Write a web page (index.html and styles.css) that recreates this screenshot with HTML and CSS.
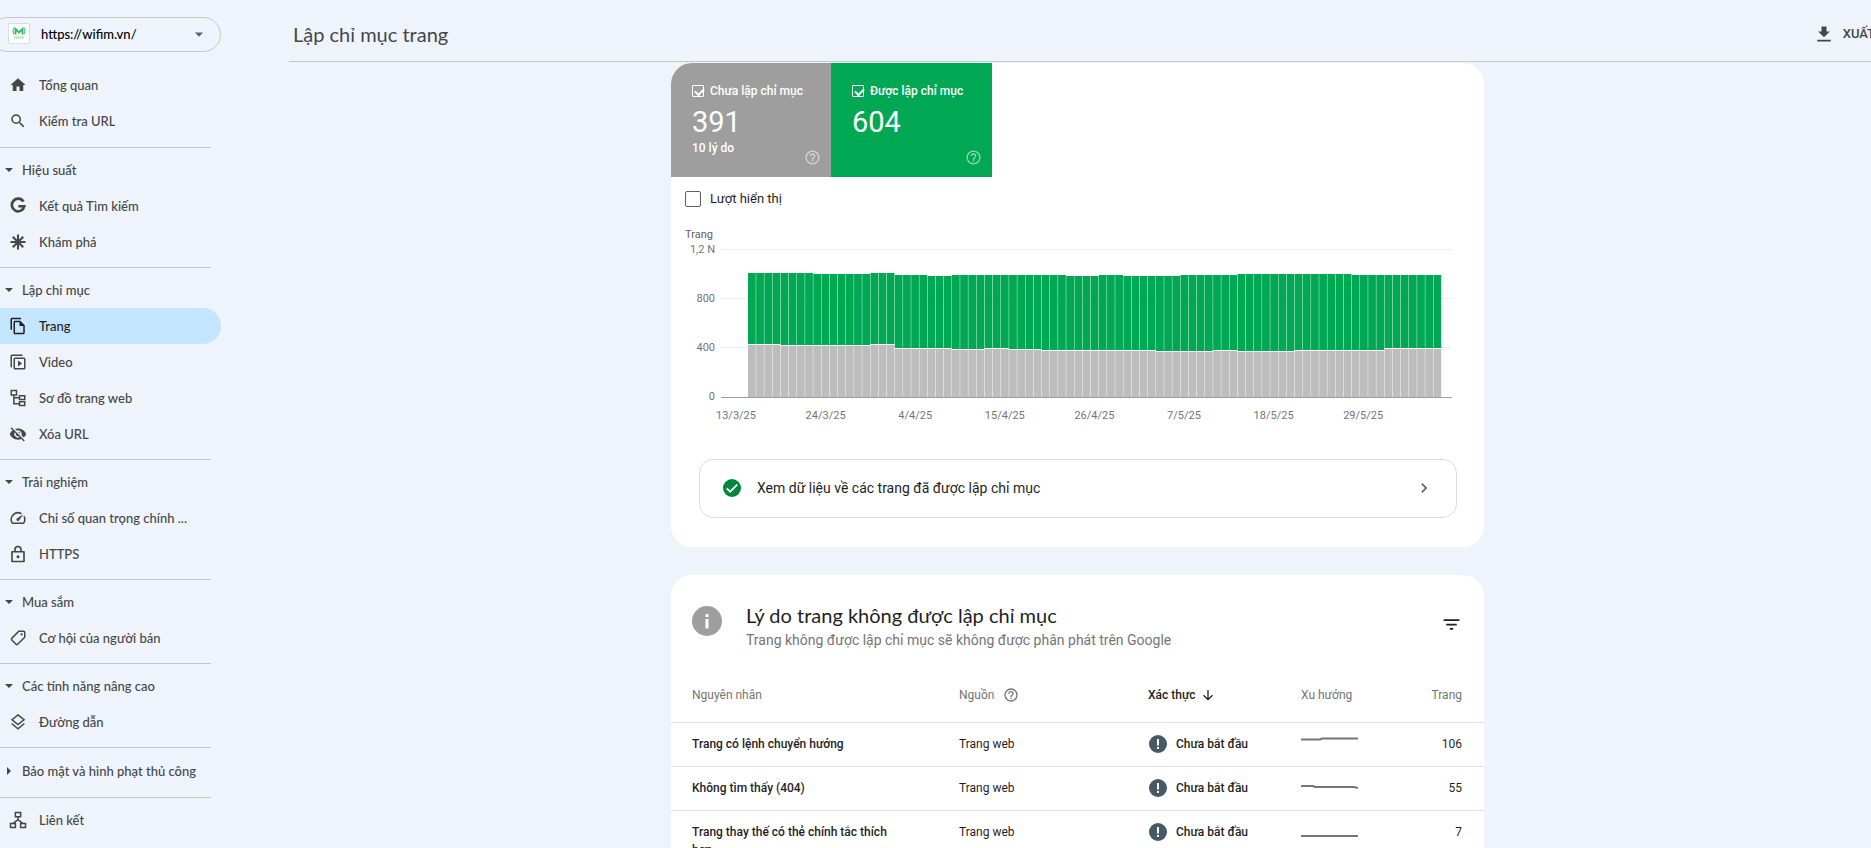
FILE: index.html
```html
<!DOCTYPE html>
<html lang="vi">
<head>
<meta charset="utf-8">
<title>Lập chỉ mục trang</title>
<link rel="stylesheet" href="styles.css">
</head>
<body>
<div class="app">
  <aside class="sidebar">
    <button class="property" type="button">
      <svg class="property-logo" viewBox="0 0 22 22" aria-hidden="true">
        <rect x=".5" y=".5" width="21" height="20" rx="1.500" fill="#fff" stroke="#dadce0"/>
        <path d="M7.500 11.500V6l3.500 3.500L14.500 6v5.500" fill="none" stroke="#34b36a" stroke-width="1.800"/>
        <path d="M6 4.500C5 6.500 5 9.500 6 11.500M16 4.500c1 2 1 5 0 7" fill="none" stroke="#56cf88" stroke-width="1.200"/>
        <path d="M6 14.500h10" stroke="#9be08f" stroke-width="2" stroke-dasharray="1.500 .5"/>
      </svg>
      <span class="property-name">https://wifim.vn/</span>
      <svg class="icon property-caret" viewBox="0 0 24 24" aria-hidden="true"><path d="M6.500 10h11L12 15.500z"/></svg>
    </button>
    <nav>
      <section class="nav-group">
        <a class="nav-item" href="#"><svg class="icon" viewBox="0 0 24 24"><path d="M10 20v-6h4v6h5v-8h3L12 3 2 12h3v8z"/></svg><span>Tổng quan</span></a>
        <a class="nav-item" href="#"><svg class="icon" viewBox="0 0 24 24"><path d="M15.500 14h-.79l-.28-.27A6.470 6.470 0 0 0 16 9.500 6.500 6.500 0 1 0 9.500 16c1.610 0 3.090-.59 4.230-1.570l.27.28v.79l5 4.990L20.490 19l-4.990-5zm-6 0C7.010 14 5 11.990 5 9.500S7.010 5 9.500 5 14 7.010 14 9.500 11.990 14 9.500 14z"/></svg><span>Kiểm tra URL</span></a>
      </section>
      <section class="nav-group">
        <button class="nav-heading" type="button"><svg class="caret" viewBox="0 0 10 10"><path d="M1 3h8L5 7z"/></svg>Hiệu suất</button>
        <a class="nav-item" href="#"><svg class="icon" viewBox="0 0 24 24"><path d="M19.300 6.200A8.400 8.400 0 1 0 20.400 12.300H12.500" fill="none" stroke="currentColor" stroke-width="3.600"/></svg><span>Kết quả Tìm kiếm</span></a>
        <a class="nav-item" href="#"><svg class="icon" viewBox="0 0 24 24"><path d="M12 2v20M2 12h20M5 5l14 14M19 5L5 19" stroke="currentColor" stroke-width="2.800"/></svg><span>Khám phá</span></a>
      </section>
      <section class="nav-group">
        <button class="nav-heading" type="button"><svg class="caret" viewBox="0 0 10 10"><path d="M1 3h8L5 7z"/></svg>Lập chỉ mục</button>
        <a class="nav-item nav-item-active" href="#"><svg class="icon" viewBox="0 0 24 24"><path d="M16 1H4C2.900 1 2 1.900 2 3v14h2V3h12V1zm-1 4H8c-1.100 0-1.990.9-1.990 2L6 21c0 1.100.89 2 1.990 2H19c1.100 0 2-.9 2-2V11l-6-6zM8 21V7h6v5h5v9H8z"/></svg><span>Trang</span></a>
        <a class="nav-item" href="#"><svg class="icon" viewBox="0 0 24 24"><path d="M18 2H4a2 2 0 0 0-2 2v15h2V4h14V2zm2 4H8a2 2 0 0 0-2 2v12c0 1.100.9 2 2 2h12a2 2 0 0 0 2-2V8a2 2 0 0 0-2-2zm0 14H8V8h12v12zm-8-10v8l5.500-4z"/></svg><span>Video</span></a>
        <a class="nav-item" href="#"><svg class="icon" viewBox="0 0 24 24"><path d="M3 2h7v6H3zM14 9h7v5h-7zM14 17h7v5h-7zM6.500 8v11.500H14M6.500 11.500H14" fill="none" stroke="currentColor" stroke-width="2"/></svg><span>Sơ đồ trang web</span></a>
        <a class="nav-item" href="#"><svg class="icon" viewBox="0 0 24 24"><path d="M12 7a5 5 0 0 1 4.640 6.830l2.920 2.920A11.800 11.800 0 0 0 23 12C21.270 7.610 17 4.500 12 4.500c-1.400 0-2.740.25-3.980.7l2.160 2.160C10.740 7.130 11.350 7 12 7zM2 4.270l2.740 2.740A11.800 11.800 0 0 0 1 12c1.730 4.390 6 7.500 11 7.500 1.550 0 3.030-.3 4.380-.84L19.730 22 21 20.730 3.270 3 2 4.270zM7.530 9.800l1.550 1.550A3 3 0 0 0 12.650 14.920l1.550 1.550A5 5 0 0 1 7.530 9.800zm4.310-.78 3.150 3.150.02-.16a3 3 0 0 0-3-3l-.17.01z"/></svg><span>Xóa URL</span></a>
      </section>
      <section class="nav-group">
        <button class="nav-heading" type="button"><svg class="caret" viewBox="0 0 10 10"><path d="M1 3h8L5 7z"/></svg>Trải nghiệm</button>
        <a class="nav-item" href="#"><svg class="icon" viewBox="0 0 24 24"><path d="M20.380 8.570l-1.230 1.850a8 8 0 0 1-.22 7.580H5.070A8 8 0 0 1 15.580 6.850l1.850-1.230A10 10 0 0 0 3.350 19a2 2 0 0 0 1.720 1h13.850a2 2 0 0 0 1.740-1 10 10 0 0 0-.27-10.440zM10.590 15.410a2 2 0 0 0 2.830 0l5.660-8.490-8.490 5.660a2 2 0 0 0 0 2.830z"/></svg><span>Chỉ số quan trọng chính ...</span></a>
        <a class="nav-item" href="#"><svg class="icon" viewBox="0 0 24 24"><path d="M4 9h16v13H4zM8 9V6a4 4 0 0 1 8 0v3" fill="none" stroke="currentColor" stroke-width="2.200" stroke-linejoin="round"/><circle cx="12" cy="15.500" r="2"/></svg><span>HTTPS</span></a>
      </section>
      <section class="nav-group">
        <button class="nav-heading" type="button"><svg class="caret" viewBox="0 0 10 10"><path d="M1 3h8L5 7z"/></svg>Mua sắm</button>
        <a class="nav-item" href="#"><svg class="icon" viewBox="0 0 24 24"><path d="M13 3h6.500A1.500 1.500 0 0 1 21 4.500V11l-9.500 9.300a1.500 1.500 0 0 1-2.100 0l-5.700-5.700a1.500 1.500 0 0 1 0-2.100z" fill="none" stroke="currentColor" stroke-width="2"/><circle cx="16.800" cy="7.200" r="1.500"/></svg><span>Cơ hội của người bán</span></a>
      </section>
      <section class="nav-group">
        <button class="nav-heading" type="button"><svg class="caret" viewBox="0 0 10 10"><path d="M1 3h8L5 7z"/></svg>Các tính năng nâng cao</button>
        <a class="nav-item" href="#"><svg class="icon" viewBox="0 0 24 24"><path d="M12 2.500 20 9l-8 6.500L4 9zM3.500 14l8.500 7 8.500-7" fill="none" stroke="currentColor" stroke-width="2"/></svg><span>Đường dẫn</span></a>
      </section>
      <section class="nav-group nav-group-closed">
        <button class="nav-heading" type="button"><svg class="caret" viewBox="0 0 10 10"><path d="M3 1v8l4-4z"/></svg>Bảo mật và hình phạt thủ công</button>
      </section>
      <section class="nav-group">
        <a class="nav-item" href="#"><svg class="icon" viewBox="0 0 24 24"><path d="M8.500 2h7v5.500h-7zM2 16.500h6.500V22H2zM15.500 16.500H22V22h-6.500zM12 7.500V12M5.500 16.500 12 11.500l6.500 5" fill="none" stroke="currentColor" stroke-width="2"/></svg><span>Liên kết</span></a>
      </section>
    </nav>
  </aside>

  <div class="content">
    <header class="topbar">
      <h1>Lập chỉ mục trang</h1>
      <button class="export" type="button"><svg class="icon-export" viewBox="0 0 24 24" aria-hidden="true"><path d="M19 9h-4V3H9v6H5l7 7 7-7zM4 19v2h16v-2H4z"/></svg>XUẤT</button>
    </header>
    <main class="main">
      <section class="card">
        <div class="tiles">
          <label class="tile tile-gray">
            <span class="tile-label"><input class="tile-check" type="checkbox" checked>Chưa lập chỉ mục</span>
            <span class="tile-value">391</span>
            <span class="tile-foot">10 lý do</span>
            <svg class="tile-help" viewBox="0 0 24 24"><use href="#help"/></svg>
          </label>
          <label class="tile tile-green">
            <span class="tile-label"><input class="tile-check" type="checkbox" checked>Được lập chỉ mục</span>
            <span class="tile-value">604</span>
            <svg class="tile-help" viewBox="0 0 24 24"><use href="#help"/></svg>
          </label>
        </div>
        <label class="impressions"><input class="box-check" type="checkbox">Lượt hiển thị</label>
        <svg class="chart" id="chart" viewBox="0 0 813 204" role="img" aria-label="Trang"></svg>
        <a class="view-data" href="#">
          <svg class="view-data-ok" viewBox="0 0 24 24"><circle cx="12" cy="12" r="12" fill="#00873c"/><path d="M5 12.500l4.500 4.500L19 7.500" fill="none" stroke="#fff" stroke-width="2.400"/></svg>
          <span class="view-data-text">Xem dữ liệu về các trang đã được lập chỉ mục</span>
          <svg class="view-data-arrow" viewBox="0 0 24 24"><path d="M10 6 8.590 7.410 13.170 12l-4.580 4.590L10 18l6-6z"/></svg>
        </a>
      </section>

      <section class="card">
        <div class="card-head">
          <svg class="info" viewBox="0 0 30 30"><circle cx="15" cy="15" r="15" fill="#9e9e9e"/><path d="M13.500 8h3v3h-3zM13.500 13h3v9.500h-3z" fill="#fff"/></svg>
          <div class="card-titles">
            <h2>Lý do trang không được lập chỉ mục</h2>
            <p>Trang không được lập chỉ mục sẽ không được phân phát trên Google</p>
          </div>
          <button class="filter" type="button" aria-label="Lọc"><svg viewBox="0 0 24 24"><path d="M10 18h4v-2h-4v2zM3 6v2h18V6H3zm3 7h12v-2H6v2z"/></svg></button>
        </div>
        <table class="reasons">
          <colgroup><col class="col-reason"><col class="col-source"><col class="col-state"><col class="col-trend"><col></colgroup>
          <thead>
            <tr>
              <th>Nguyên nhân</th>
              <th><span class="th-inner">Nguồn<svg class="th-help" viewBox="0 0 24 24"><use href="#help"/></svg></span></th>
              <th class="sorted"><span class="th-inner th-sort">Xác thực<svg class="th-arrow" viewBox="0 0 12 12"><path d="M6 1v9.500M1.500 6.200 6 10.700l4.500-4.500" fill="none" stroke="currentColor" stroke-width="1.300"/></svg></span></th>
              <th>Xu hướng</th>
              <th class="num">Trang</th>
            </tr>
          </thead>
          <tbody>
            <tr>
              <td class="reason">Trang có lệnh chuyển hướng</td><td>Trang web</td>
              <td class="state"><span class="state-inner"><svg class="alert" viewBox="0 0 18 18"><use href="#alert"/></svg>Chưa bắt đầu</span></td>
              <td><svg class="trend" viewBox="0 0 57 20"><path d="M0 5.500h19l2-1h36"/></svg></td><td class="num">106</td>
            </tr>
            <tr>
              <td class="reason">Không tìm thấy (404)</td><td>Trang web</td>
              <td class="state"><span class="state-inner"><svg class="alert" viewBox="0 0 18 18"><use href="#alert"/></svg>Chưa bắt đầu</span></td>
              <td><svg class="trend" viewBox="0 0 57 20"><path d="M0 8h12l2 1h39l4 1"/></svg></td><td class="num">55</td>
            </tr>
            <tr>
              <td class="reason">Trang thay thế có thẻ chính tắc thích hợp</td><td>Trang web</td>
              <td class="state"><span class="state-inner"><svg class="alert" viewBox="0 0 18 18"><use href="#alert"/></svg>Chưa bắt đầu</span></td>
              <td><svg class="trend" viewBox="0 0 57 20"><path d="M0 14h57"/></svg></td><td class="num">7</td>
            </tr>
          </tbody>
        </table>
      </section>
    </main>
  </div>
</div>

<svg class="defs" aria-hidden="true">
  <symbol id="help" viewBox="0 0 24 24"><path d="M11 18h2v-2h-2v2zm1-16a10 10 0 1 0 0 20 10 10 0 0 0 0-20zm0 18a8 8 0 1 1 0-16 8 8 0 0 1 0 16zm0-14a4 4 0 0 0-4 4h2a2 2 0 1 1 4 0c0 2-3 1.750-3 5h2c0-2.250 3-2.500 3-5a4 4 0 0 0-4-4z"/></symbol>
  <symbol id="alert" viewBox="0 0 18 18"><circle cx="9" cy="9" r="9" fill="#455a64"/><path d="M8 4h2v6.500H8zM8 12h2v2H8z" fill="#fff"/></symbol>
</svg>
<script src="chart.js"></script>
</body>
</html>
```

FILE: styles.css
```css
* {
  box-sizing: border-box;
}

:root {
  --brand: "Google Sans", Lato, "Noto Sans", sans-serif;
  --text: Roboto, "Noto Sans", sans-serif;
  --ink: #1f1f1f;
  --muted: #757575;
  --nav: #444746;
  --rule: #c4c7c5;
}

body {
  margin: 0;
  background: #eff4fc;
  color: var(--ink);
  font: 12px/18px var(--text);
}

button {
  border: 0;
  padding: 0;
  background: none;
  color: inherit;
  font: inherit;
  text-align: left;
  cursor: pointer;
}

a {
  color: inherit;
  text-decoration: none;
}

svg {
  display: block;
  flex: none;
  fill: currentColor;
}

.defs {
  display: none;
}

.app {
  display: grid;
  grid-template-columns: 284px minmax(0, 1fr);
  height: 100vh;
  overflow: hidden;
}

/* Sidebar */

.sidebar {
  padding-top: 17px;
  color: var(--nav);
  font: 500 13px/20px var(--brand);
}

.property {
  display: flex;
  align-items: center;
  width: 231px;
  height: 35px;
  margin: 0 0 15px -10px;
  padding: 0 12px 1px 17px;
  border: 1px solid var(--rule);
  border-radius: 18px;
  color: #000;
}

.property-logo {
  width: 22px;
  height: 22px;
}

.property-name {
  flex: 1;
  padding-left: 11px;
}

.icon {
  width: 18px;
  height: 18px;
}

.property-caret {
  color: #5f6368;
}

.nav-group {
  width: 211px;
  padding: 4px 0 7px;
  border-bottom: 1px solid var(--rule);
}

.nav-group:first-child {
  padding: 0 0 8px;
}

.nav-group:last-child {
  border-bottom: 0;
}

.nav-group-closed {
  padding: 5px 0 8px;
}

.nav-heading {
  display: flex;
  align-items: center;
  gap: 8px;
  width: 100%;
  height: 36px;
  padding-left: 4px;
  white-space: nowrap;
}

.caret {
  width: 10px;
  height: 10px;
}

.nav-item {
  display: flex;
  align-items: center;
  gap: 12px;
  height: 36px;
  padding: 0 10px 0 9px;
}

.nav-item span {
  overflow: hidden;
  text-overflow: ellipsis;
  white-space: nowrap;
}

.nav-item-active {
  width: 221px;
  border-radius: 0 18px 18px 0;
  background: #c4e5ff;
  color: var(--ink);
}

/* Top bar */

.content {
  display: flex;
  flex-direction: column;
  min-width: 0;
}

.topbar {
  display: flex;
  align-items: center;
  justify-content: space-between;
  height: 62px;
  margin: 0 -4px 1px 5px;
  padding: 6px 0 0 4px;
  border-bottom: 1px solid var(--rule);
  color: var(--nav);
}

h1 {
  margin: 0;
  font: 400 20px/24px var(--brand);
}

.export {
  display: flex;
  align-items: center;
  gap: 9px;
  font: 500 13px/20px var(--text);
  white-space: nowrap;
}

.icon-export {
  width: 20px;
  height: 20px;
}

/* Cards */

.main {
  flex: 1;
  min-height: 0;
  overflow: hidden;
}

.card {
  max-width: 813px;
  margin: 0 auto 28px;
  padding-bottom: 29px;
  border-radius: 21px;
  background: #fff;
  overflow: hidden;
}

.tiles {
  display: flex;
}

.tile {
  position: relative;
  display: flex;
  flex-direction: column;
  width: 160px;
  height: 114px;
  padding: 19px 0 0 21px;
  color: #fff;
  font-weight: 500;
}

.tile-gray {
  background: #9e9e9e;
}

.tile-green {
  width: 161px;
  background: #00a854;
}

.tile-label {
  display: flex;
  align-items: center;
  gap: 6px;
}

.tile-check {
  appearance: none;
  width: 12px;
  height: 12px;
  margin: 0;
  border: 1px solid #fff;
  border-radius: 1px;
}

.tile-check:checked::after {
  content: "";
  display: block;
  width: 7px;
  height: 4px;
  margin: 2px 0 0 2px;
  border: solid #fff;
  border-width: 0 0 2px 2px;
  transform: rotate(-45deg);
}

.tile-value {
  padding-top: 5px;
  font-size: 29px;
  font-weight: 400;
  line-height: 34px;
}

.tile-help {
  position: absolute;
  right: 10px;
  bottom: 11px;
  width: 17px;
  height: 17px;
  opacity: .55;
}

.impressions {
  display: flex;
  align-items: center;
  gap: 9px;
  padding: 13px 0 0 14px;
  font-size: 13px;
}

.box-check {
  appearance: none;
  width: 16px;
  height: 16px;
  margin: 0;
  border: 1px solid #616161;
  border-radius: 2px;
}

.chart {
  width: 100%;
  margin-top: 19px;
  font-size: 11px;
  fill: var(--muted);
}

.chart-title {
  fill: #616161;
}

.end {
  text-anchor: end;
}

.mid {
  text-anchor: middle;
}

.grid-line {
  stroke: #eee;
}

.axis-line {
  stroke: #9e9e9e;
}

.bar-indexed {
  fill: #00a854;
}

.bar-excluded {
  fill: #bdbdbd;
}

.view-data {
  display: flex;
  align-items: center;
  height: 59px;
  margin: 28px 27px 0 28px;
  padding: 0 22px 1px 23px;
  border: 1px solid #dadce0;
  border-radius: 14px;
  font-size: 14px;
}

.view-data-ok {
  width: 18px;
  height: 18px;
}

.view-data-text {
  flex: 1;
  padding-left: 16px;
}

.view-data-arrow {
  width: 20px;
  height: 20px;
  color: #5f6368;
}

.card-head {
  display: flex;
  gap: 24px;
  padding: 27px 22px 0 21px;
}

.info {
  width: 30px;
  height: 30px;
  margin-top: 4px;
}

.card-titles {
  flex: 1;
}

h2 {
  margin: 0;
  font: 400 20px/26px var(--brand);
}

.card-titles p {
  margin: 0;
  color: var(--muted);
  font-size: 14px;
  line-height: 24px;
}

.filter {
  width: 21px;
  height: 21px;
  margin-top: 12px;
}

/* Table */

.reasons {
  width: 100%;
  margin-top: 17px;
  border-collapse: collapse;
  table-layout: fixed;
}

.col-reason {
  width: 288px;
}

.col-source {
  width: 189px;
}

.col-state {
  width: 153px;
}

.col-trend {
  width: 99px;
}

th,
td {
  padding: 0;
  border-bottom: 1px solid #e0e0e0;
  text-align: left;
}

th {
  height: 53px;
  color: var(--muted);
  font-weight: 400;
}

td {
  padding: 12px 0 13px;
  vertical-align: top;
}

th:first-child,
td:first-child {
  padding-left: 21px;
}

.reasons .reason {
  padding-right: 60px;
}

.reasons .num {
  padding-right: 22px;
  text-align: right;
}

.sorted {
  color: var(--ink);
}

.sorted,
.reason,
.state {
  font-weight: 500;
}

.th-inner,
.state-inner {
  display: flex;
  align-items: center;
  gap: 9px;
}

.th-sort {
  gap: 6px;
}

.th-help {
  width: 16px;
  height: 16px;
}

.th-arrow {
  width: 12px;
  height: 12px;
}

.alert {
  width: 18px;
  height: 18px;
}

.state-inner {
  padding-left: 1px;
}

.trend {
  width: 57px;
  height: 20px;
  margin: -1px 0;
  fill: none;
  stroke: #757575;
  stroke-width: 2;
}
```

FILE: chart.js
```js
(function () {
  var chart = document.getElementById("chart");
  var base = 170;
  var left = 50;
  var right = 781;
  var firstBar = 77;
  var step = 8.16;

  // [number of days, bar height]
  var total = [[8, 124], [7, 123], [3, 124], [4, 122], [3, 121], [14, 122], [4, 121], [3, 122], [7, 121], [7, 122], [14, 123], [11, 122]];
  var excluded = [[4, 52], [11, 51], [3, 52], [7, 48], [4, 47], [3, 48], [4, 47], [14, 46], [7, 45], [3, 46], [7, 45], [11, 46], [7, 48]];

  function add(name, attrs, text) {
    var node = document.createElementNS("http://www.w3.org/2000/svg", name);
    Object.keys(attrs).forEach(function (key) {
      node.setAttribute(key, attrs[key]);
    });
    if (text) node.textContent = text;
    chart.appendChild(node);
  }

  function expand(runs) {
    return runs.reduce(function (out, run) {
      for (var i = 0; i < run[0]; i++) out.push(run[1]);
      return out;
    }, []);
  }

  add("text", { x: 14, y: 11, "class": "chart-title" }, "Trang");

  ["0", "400", "800", "1,2 N"].forEach(function (label, i) {
    var y = base - i * 49;
    add("text", { x: 44, y: y + 3, "class": "end" }, label);
    if (i) add("path", { d: "M" + left + " " + (y - 0.5) + "H" + right, "class": "grid-line" });
  });

  var totals = expand(total);
  var grays = expand(excluded);
  totals.forEach(function (height, i) {
    var x = firstBar + i * step;
    add("rect", { x: x, y: base - height, width: step - 0.4, height: height - grays[i] - 1, "class": "bar-indexed" });
    add("rect", { x: x, y: base - grays[i], width: step - 0.4, height: grays[i], "class": "bar-excluded" });
  });
  add("path", { d: "M" + left + " " + (base + 0.5) + "H" + right, "class": "axis-line" });

  ["13/3/25", "24/3/25", "4/4/25", "15/4/25", "26/4/25", "7/5/25", "18/5/25", "29/5/25"].forEach(function (label, i) {
    add("text", { x: 65 + i * 89.6, y: 192, "class": "mid" }, label);
  });
})();
```
